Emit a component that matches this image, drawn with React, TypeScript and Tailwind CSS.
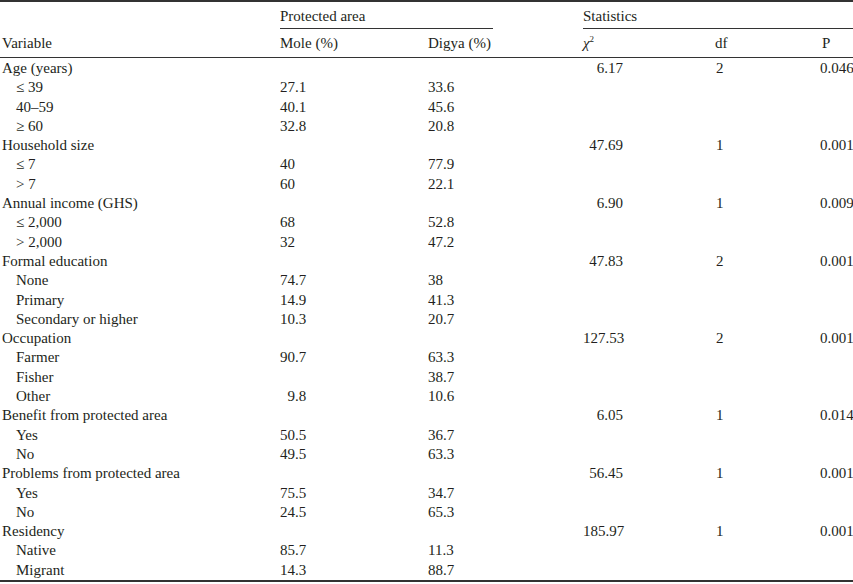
type Row = {
  label: string;
  sub?: boolean;
  mole?: string;
  molePad?: boolean;
  digya?: string;
  chi?: string;
  df?: string;
  p?: string;
};

const rows: Row[] = [
  { label: 'Age (years)', chi: '6.17', df: '2', p: '0.046' },
  { label: '≤ 39', sub: true, mole: '27.1', digya: '33.6' },
  { label: '40–59', sub: true, mole: '40.1', digya: '45.6' },
  { label: '≥ 60', sub: true, mole: '32.8', digya: '20.8' },
  { label: 'Household size', chi: '47.69', df: '1', p: '0.001' },
  { label: '≤ 7', sub: true, mole: '40', digya: '77.9' },
  { label: '> 7', sub: true, mole: '60', digya: '22.1' },
  { label: 'Annual income (GHS)', chi: '6.90', df: '1', p: '0.009' },
  { label: '≤ 2,000', sub: true, mole: '68', digya: '52.8' },
  { label: '> 2,000', sub: true, mole: '32', digya: '47.2' },
  { label: 'Formal education', chi: '47.83', df: '2', p: '0.001' },
  { label: 'None', sub: true, mole: '74.7', digya: '38' },
  { label: 'Primary', sub: true, mole: '14.9', digya: '41.3' },
  { label: 'Secondary or higher', sub: true, mole: '10.3', digya: '20.7' },
  { label: 'Occupation', chi: '127.53', df: '2', p: '0.001' },
  { label: 'Farmer', sub: true, mole: '90.7', digya: '63.3' },
  { label: 'Fisher', sub: true, digya: '38.7' },
  { label: 'Other', sub: true, mole: '9.8', molePad: true, digya: '10.6' },
  { label: 'Benefit from protected area', chi: '6.05', df: '1', p: '0.014' },
  { label: 'Yes', sub: true, mole: '50.5', digya: '36.7' },
  { label: 'No', sub: true, mole: '49.5', digya: '63.3' },
  { label: 'Problems from protected area', chi: '56.45', df: '1', p: '0.001' },
  { label: 'Yes', sub: true, mole: '75.5', digya: '34.7' },
  { label: 'No', sub: true, mole: '24.5', digya: '65.3' },
  { label: 'Residency', chi: '185.97', df: '1', p: '0.001' },
  { label: 'Native', sub: true, mole: '85.7', digya: '11.3' },
  { label: 'Migrant', sub: true, mole: '14.3', digya: '88.7' },
];

const cols = 'grid grid-cols-[280px_148px_155px_132px_105px_33px]';

const App = () => {
  return (
    <div className="w-[853px] h-[584px] bg-white font-['Liberation_Serif',serif] text-[15px] text-[#231f20]">
      <div className="border-t-2 border-b-2 border-[#333]">
        {/* Header */}
        <div className="border-b border-[#333]">
          <div className={`${cols} h-[27px]`}>
            <div />
            <div className="col-span-2">
              <div className="w-[213px] h-full flex items-center pt-[2px] border-b border-[#333]">Protected area</div>
            </div>
            <div className="col-span-3 h-full flex items-center pt-[2px] border-b border-[#333]">Statistics</div>
          </div>
          <div className={`${cols} h-[28px] items-center pt-px`}>
            <div className="pl-[2px]">Variable</div>
            <div>Mole (%)</div>
            <div>Digya (%)</div>
            <div>
              <i>χ</i>
              <sup className="text-[9px] -top-[0.7em]">2</sup>
            </div>
            <div>df</div>
            <div className="pl-[2px]">P</div>
          </div>
        </div>

        {/* Body */}
        <div className="pt-px">
          {rows.map((r, i) => (
            <div key={i} className={`${cols} h-[19.3px] leading-[19.3px] whitespace-nowrap`}>
              <div className={r.sub ? 'pl-[16px]' : 'pl-[2px]'}>{r.label}</div>
              <div className={r.molePad ? 'pl-[7.5px]' : ''}>{r.mole}</div>
              <div>{r.digya}</div>
              <div className="text-right pr-[92px]">{r.chi}</div>
              <div className="pl-px">{r.df}</div>
              <div>{r.p}</div>
            </div>
          ))}
        </div>
      </div>
    </div>
  );
};

export default App;
